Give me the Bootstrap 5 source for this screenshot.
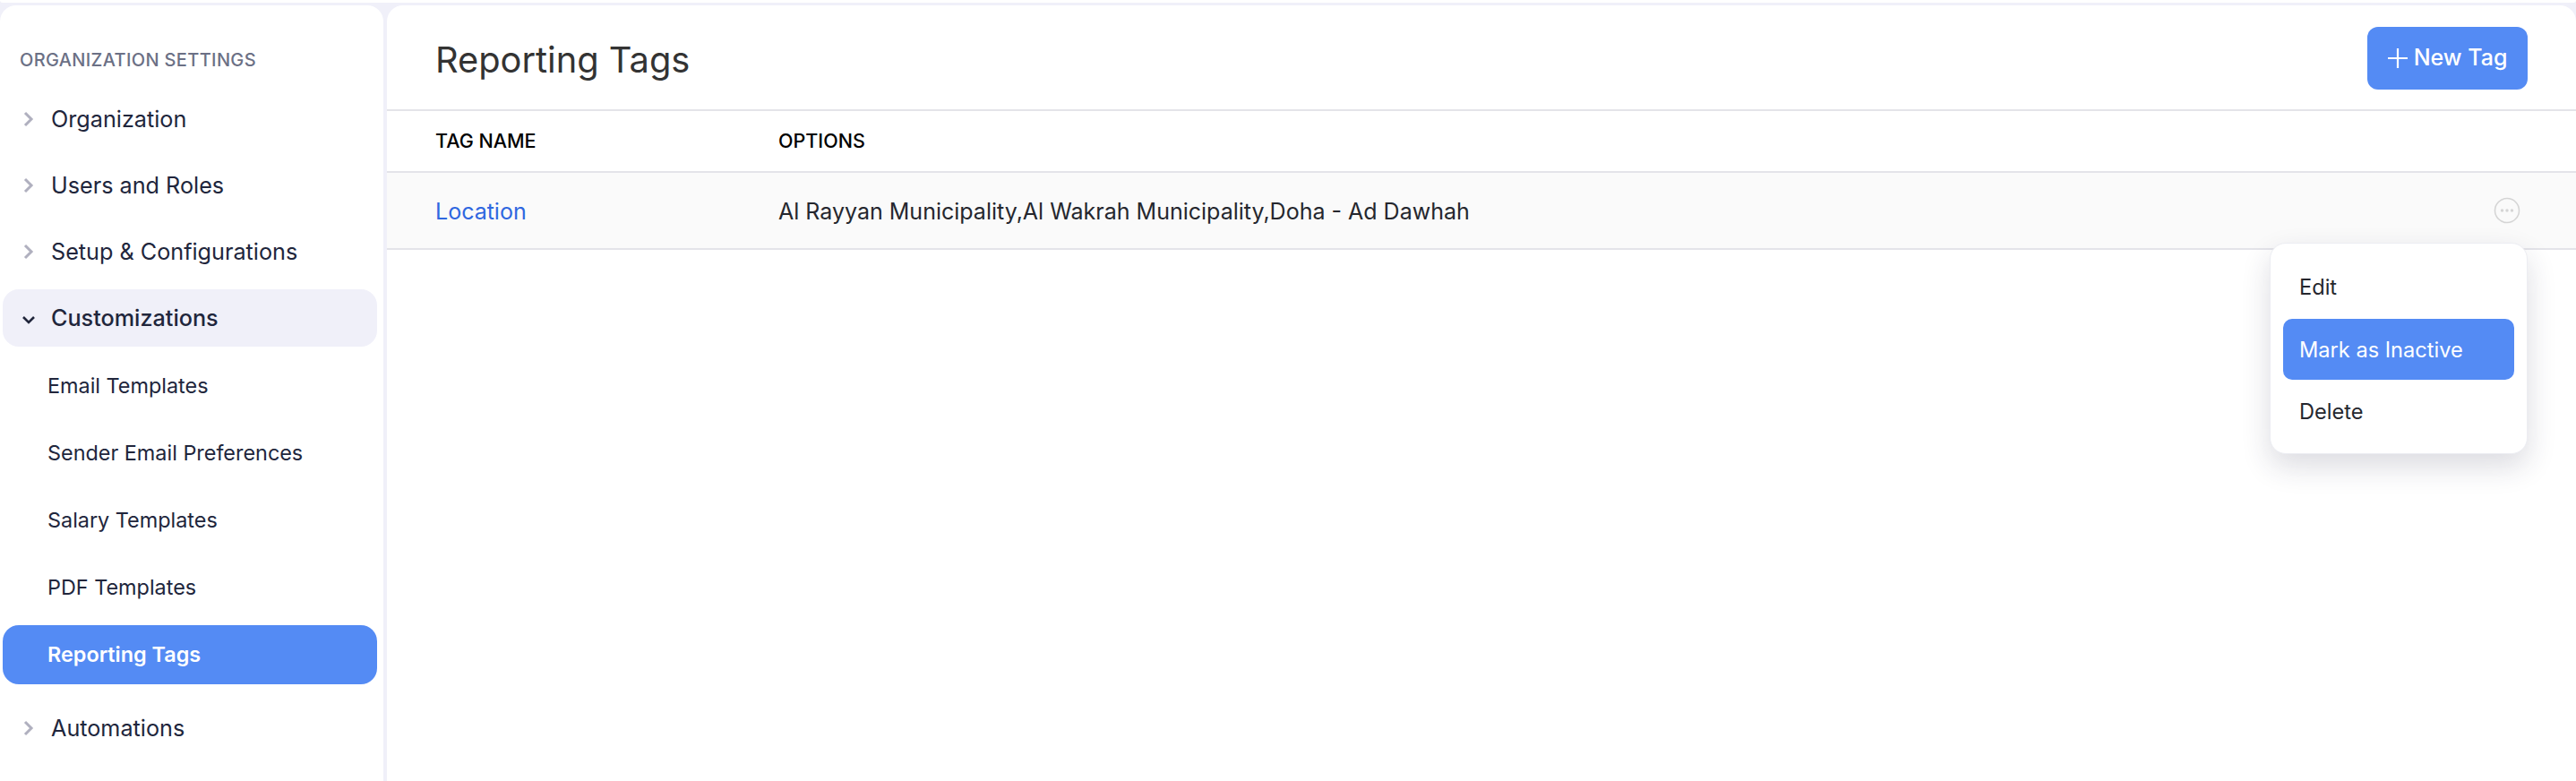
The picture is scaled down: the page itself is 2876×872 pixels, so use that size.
<!DOCTYPE html>
<html lang="en">
<head>
<meta charset="utf-8">
<title>Reporting Tags</title>
<link href="https://cdn.jsdelivr.net/npm/bootstrap@5.3.0/dist/css/bootstrap.min.css" rel="stylesheet">
<style>
html,body{height:872px;overflow:hidden}
body{background:#f0f0f9;font-family:Inter,"Liberation Sans",sans-serif;color:#21263c}
.topstrip{height:3px;background:#fff;border-radius:0 0 12px 12px;margin-bottom:3px}
.shell{height:866px;gap:4px}
.sidepane{width:428px;background:#fff;border-radius:18px 18px 0 0;padding:0 7px 0 3px;flex:none}
.sidehead{font-size:20px;font-weight:500;color:#6b7085;letter-spacing:.35px;padding:45px 0 0 19px;line-height:32px;margin-bottom:18px;text-transform:uppercase}
.sideitem{height:64px;margin-bottom:10px;padding-left:21px;font-size:25.2px;line-height:64px;border-radius:18px;color:#21263c;text-decoration:none;gap:17px}
.sideitem svg{width:16px;height:22px;flex:none}
.sideitem.is-open{background:#f0f0f9;font-weight:500;margin-bottom:11px}
.subitem{height:66px;margin-bottom:9px;padding-left:50px;font-size:23.4px;line-height:66px;border-radius:18px;color:#21263c;text-decoration:none;display:block}
.subitem.is-current{background:#548bf4;color:#fff;font-weight:600;margin-bottom:17px}
.mainpane{background:#fff;border-radius:18px 18px 0 0;position:relative}
.pagehead{height:118px;padding:2px 54px 0;border-bottom:2px solid #e4e4e9}
.pagetitle{font-size:39.8px;font-weight:400;color:#333;margin:4px 0 0}
.addbtn{width:179px;height:70px;background:#548bf4;border:0;border-radius:12px;color:#fff;font-size:25px;font-weight:500;gap:7px;padding:0}
.addbtn:hover{background:#548bf4;color:#fff}
.tagtable{table-layout:fixed;width:100%;margin:0}
.tagtable th,.tagtable td{border-bottom:2px solid #e4e4e9;padding:0;vertical-align:middle;box-shadow:none}
.tagtable th{height:68px;font-size:21.5px;font-weight:500;color:#000;text-transform:uppercase;background:#fff}
.tagtable td{height:86px;font-size:25px;color:#25272e;background:#fafafa;padding-top:3px}
.tagtable .colname{width:437px;padding-left:54px}
.taglink{color:#2f67e0;text-decoration:none}
.rowmenu{width:100px;text-align:left}
.rowmenu svg{width:30px;height:30px;display:block;margin:-3px 0 0 8px}
.actionmenu{position:absolute;display:block;left:2102px;top:265px;width:288px;height:236px;padding:14px;border:1px solid #ecedf2;border-radius:18px;background:#fff;box-shadow:0 14px 32px rgba(40,40,70,.16)}
.actionmenu .dropdown-item{height:68px;margin-bottom:1.5px;padding:0 0 0 18px;line-height:70px;font-size:23.6px;color:#25272e;border-radius:10px}
.actionmenu .dropdown-item.active{background:#548bf4;color:#fff}
</style>
</head>
<body>
<div class="topstrip"></div>
<div class="shell d-flex">
  <nav class="sidepane d-flex flex-column">
    <div class="sidehead">Organization Settings</div>
    <a class="sideitem d-flex align-items-center" href="#"><svg viewBox="0 0 16 22" fill="none" stroke="#b0b0bf" stroke-width="3"><path d="M4 4l7 7-7 7"/></svg>Organization</a>
    <a class="sideitem d-flex align-items-center" href="#"><svg viewBox="0 0 16 22" fill="none" stroke="#b0b0bf" stroke-width="3"><path d="M4 4l7 7-7 7"/></svg>Users and Roles</a>
    <a class="sideitem d-flex align-items-center" href="#"><svg viewBox="0 0 16 22" fill="none" stroke="#b0b0bf" stroke-width="3"><path d="M4 4l7 7-7 7"/></svg>Setup &amp; Configurations</a>
    <a class="sideitem is-open d-flex align-items-center" href="#"><svg viewBox="0 0 16 22" fill="none" stroke="#21263c" stroke-width="2.6"><path d="M2 10l6 6 6-6"/></svg>Customizations</a>
    <a class="subitem" href="#">Email Templates</a>
    <a class="subitem" href="#">Sender Email Preferences</a>
    <a class="subitem" href="#">Salary Templates</a>
    <a class="subitem" href="#">PDF Templates</a>
    <a class="subitem is-current" href="#">Reporting Tags</a>
    <a class="sideitem d-flex align-items-center" href="#"><svg viewBox="0 0 16 22" fill="none" stroke="#b0b0bf" stroke-width="3"><path d="M4 4l7 7-7 7"/></svg>Automations</a>
  </nav>
  <main class="mainpane flex-grow-1">
    <header class="pagehead d-flex align-items-center justify-content-between">
      <h1 class="pagetitle">Reporting Tags</h1>
      <button class="btn addbtn d-flex align-items-center justify-content-center" type="button"><svg width="22" height="22" viewBox="0 0 22 22" stroke="#fff" stroke-width="2.2"><path d="M11 0v22M0 11h22"/></svg>New Tag</button>
    </header>
    <table class="table tagtable">
      <thead><tr><th class="colname">Tag Name</th><th>Options</th><th class="rowmenu"></th></tr></thead>
      <tbody><tr>
        <td class="colname"><a class="taglink" href="#">Location</a></td>
        <td>Al Rayyan Municipality,Al Wakrah Municipality,Doha - Ad Dawhah</td>
        <td class="rowmenu"><svg viewBox="0 0 30 30" fill="#d5d5d5"><circle cx="15" cy="15" r="13.5" fill="none" stroke="#d5d5d5" stroke-width="1.6"/><circle cx="9.5" cy="15" r="1.7"/><circle cx="15" cy="15" r="1.7"/><circle cx="20.5" cy="15" r="1.7"/></svg></td>
      </tr></tbody>
    </table>
    <div class="dropdown-menu actionmenu">
      <a class="dropdown-item" href="#">Edit</a>
      <a class="dropdown-item active" href="#">Mark as Inactive</a>
      <a class="dropdown-item" href="#">Delete</a>
    </div>
  </main>
</div>
<script src="https://cdn.jsdelivr.net/npm/bootstrap@5.3.0/dist/js/bootstrap.bundle.min.js"></script>
</body>
</html>
